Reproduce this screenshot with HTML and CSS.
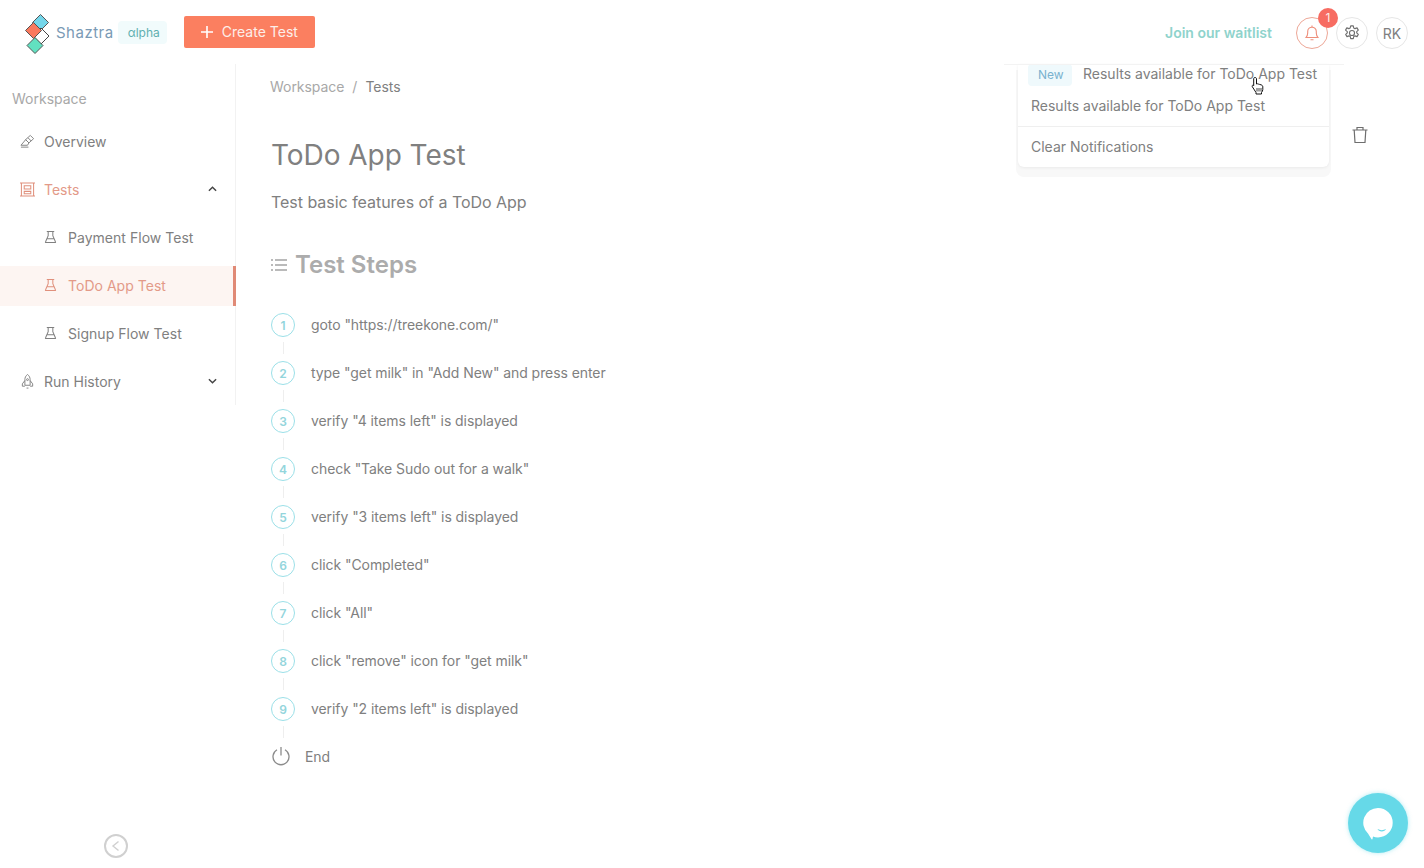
FILE: index.html
```html
<!DOCTYPE html>
<html lang="en">
<head>
<meta charset="utf-8">
<title>ToDo App Test</title>
<link rel="stylesheet" href="styles.css">
</head>
<body>
<header class="topbar">
  <a class="brand">
    <svg class="logo" width="28" height="40" viewBox="0 0 28 40">
      <path d="M16.500 .5 L24.500 8.500 L16.500 16.500 L8.500 8.500Z" fill="#74d6ea" stroke="#555" stroke-width="1"/>
      <path d="M17 14 L25 22 L17 30 L9 22Z" fill="#fff" stroke="#444" stroke-width="1"/>
      <path d="M9.500 8.500 L17.500 16.500 L9.500 24.500 L1.500 16.500Z" fill="#f9795e" stroke="#555" stroke-width="1"/>
      <path d="M11 23.500 L19 31.500 L11 39.500 L3 31.500Z" fill="#62e0c0" stroke="#555" stroke-width="1"/>
    </svg>
    <span class="brand-name">Shaztra</span>
    <span class="brand-tag">αlpha</span>
  </a>
  <button class="create-btn">
    <svg class="plus" width="12" height="12" viewBox="0 0 12 12"><path d="M6 0v12M0 6h12" stroke="#fff" stroke-width="1.600"/></svg>
    Create Test
  </button>
  <div class="top-actions">
    <a class="waitlist">Join our waitlist</a>
    <div class="round-btn bell">
      <svg width="18" height="18" viewBox="0 0 18 18" fill="none" stroke="#ee8f7b" stroke-width="1.100"><path d="M3 13.500h12c-1.200-1.300-1.700-2.500-1.700-4.500V7.500a4.300 4.300 0 0 0-8.600 0V9c0 2-.5 3.200-1.700 4.500z"/><path d="M7.500 15.700h3M9 1.500v1.500"/></svg>
      <span class="badge">1</span>
    </div>
    <div class="round-btn">
      <svg width="18" height="18" viewBox="0 0 24 24" fill="none" stroke="#6e6e6e" stroke-width="1.500"><circle cx="12" cy="12" r="3.400"/><path d="M10.300 2.500h3.400l.6 2.800 1.700.9 2.700-1 1.700 3-2.100 1.900v1.800l2.100 1.900-1.700 3-2.700-1-1.700.9-.6 2.800h-3.400l-.6-2.800-1.700-.9-2.700 1-1.700-3 2.100-1.900v-1.800L3.400 8.200l1.700-3 2.700 1 1.700-.9z" stroke-linejoin="round"/></svg>
    </div>
    <div class="round-btn avatar">RK</div>
  </div>
</header>

<div class="notif-menu">
  <div class="notif-row first"><span class="new-tag">New</span><span>Results available for ToDo App Test</span></div>
  <div class="notif-row second">Results available for ToDo App Test</div>
  <div class="notif-clear">Clear Notifications</div>
</div>
<svg class="cursor" width="16" height="20" viewBox="0 0 16 20">
  <path d="M5 1.500c1 0 1.500.6 1.500 1.500v5l1-.2 1 .3 1 .3 1.500.4c1.200.4 1.800 1 1.800 2.200v2.500c0 1.200-.6 2-1.300 3v1.500H6v-1.500L2.500 11c-.8-1-.3-2 .8-1.800l.4.500V3c0-1 .4-1.500 1.300-1.500z" fill="#fff" stroke="#111" stroke-width="1"/>
  <path d="M7 12v3.500M9 12v3.500M11 12v3.500" stroke="#111" stroke-width=".8"/>
</svg>

<div class="layout">
  <aside class="sidebar">
    <nav class="nav">
      <div class="nav-label">Workspace</div>
      <a class="nav-item">
        <svg class="ico" viewBox="0 0 16 16" fill="none" stroke="#808080" stroke-width="1"><path d="M11 1.500l3.500 3.500-5 4.500-3.500-3.500z"/><path d="M6 6L9.500 9.500 8 12H1l3-3.500z"/><path d="M8.500 4l3.500 3.500M1 14h8"/></svg>
        <span>Overview</span>
      </a>
      <a class="nav-item open">
        <svg class="ico" viewBox="0 0 16 16" fill="none" stroke="#e0907c" stroke-width="1.100"><path d="M0 1h16M0 15h16M1.500 1v14M14.500 1v14"/><path d="M4.500 4h7v3.500h-7zM4.500 10h7v2.500h-7z"/></svg>
        <span class="grow">Tests</span>
        <svg class="chev" viewBox="0 0 10 6"><path d="M1 5l4-4 4 4" fill="none" stroke="#444" stroke-width="1.600"/></svg>
      </a>
      <a class="nav-item sub">
        <svg class="ico small" viewBox="0 0 14 14" fill="none" stroke="#808080" stroke-width="1.100"><path d="M3 1h8M4.500 1v4.500L1.600 12.300c-.2.400 0 .7.400.7h10c.4 0 .6-.3.400-.7L9.500 5.500V1M3.200 9h7.600"/></svg>
        <span>Payment Flow Test</span>
      </a>
      <a class="nav-item sub active">
        <svg class="ico small" viewBox="0 0 14 14" fill="none" stroke="#e0907c" stroke-width="1.100"><path d="M3 1h8M4.500 1v4.500L1.600 12.300c-.2.400 0 .7.400.7h10c.4 0 .6-.3.400-.7L9.500 5.500V1M3.200 9h7.600"/></svg>
        <span>ToDo App Test</span>
      </a>
      <a class="nav-item sub">
        <svg class="ico small" viewBox="0 0 14 14" fill="none" stroke="#808080" stroke-width="1.100"><path d="M3 1h8M4.500 1v4.500L1.600 12.300c-.2.400 0 .7.400.7h10c.4 0 .6-.3.400-.7L9.500 5.500V1M3.200 9h7.600"/></svg>
        <span>Signup Flow Test</span>
      </a>
      <a class="nav-item">
        <svg class="ico" viewBox="0 0 16 16" fill="none" stroke="#808080" stroke-width="1"><path d="M8 .5c2 1.500 2.800 3.500 2.800 5.500v6H5.200V6C5.200 4 6 2 8 .5z"/><path d="M5.200 7L2.500 10.500V13h2.700M10.800 7l2.700 3.500V13h-2.700M7 15h2"/><circle cx="8" cy="6" r="1"/></svg>
        <span class="grow">Run History</span>
        <svg class="chev" viewBox="0 0 10 6"><path d="M1 1l4 4 4-4" fill="none" stroke="#444" stroke-width="1.600"/></svg>
      </a>
    </nav>
    <div class="collapse">
      <svg width="24" height="24" viewBox="0 0 24 24" fill="none" stroke="#d0d0d0" stroke-width="2"><circle cx="12" cy="12" r="11"/><path d="M14.500 7.500L9 12l5.500 4.500" stroke-width="1.400"/></svg>
    </div>
  </aside>

  <main class="content">
    <div class="crumbs">
      <span class="crumb-link">Workspace</span><span class="crumb-sep">/</span><span class="crumb-cur">Tests</span>
    </div>
    <div class="title-row">
      <div class="titles">
        <h1 class="title">ToDo App Test</h1>
        <p class="desc">Test basic features of a ToDo App</p>
      </div>
      <svg class="trash" width="18" height="18" viewBox="0 0 18 18" fill="none" stroke="#6e6e6e" stroke-width="1.200"><path d="M1.500 4h15M6 4V1.500h6V4M3.200 4l.8 12.500h10l.8-12.500"/></svg>
    </div>
    <h2 class="steps-head">
      <svg width="16" height="12" viewBox="0 0 16 12" fill="none" stroke="#777" stroke-width="1.200"><path d="M4 1h12M4 6h12M4 11h12M0 1h2M0 6h2M0 11h2"/></svg>
      <span>Test Steps</span>
    </h2>
    <ol class="steps">
      <li class="step"><span class="num">1</span><span>goto "https://treekone.com/"</span></li>
      <li class="step"><span class="num">2</span><span>type "get milk" in "Add New" and press enter</span></li>
      <li class="step"><span class="num">3</span><span>verify "4 items left" is displayed</span></li>
      <li class="step"><span class="num">4</span><span>check "Take Sudo out for a walk"</span></li>
      <li class="step"><span class="num">5</span><span>verify "3 items left" is displayed</span></li>
      <li class="step"><span class="num">6</span><span>click "Completed"</span></li>
      <li class="step"><span class="num">7</span><span>click "All"</span></li>
      <li class="step"><span class="num">8</span><span>click "remove" icon for "get milk"</span></li>
      <li class="step"><span class="num">9</span><span>verify "2 items left" is displayed</span></li>
      <li class="step end">
        <svg class="power" width="20" height="20" viewBox="0 0 20 20" fill="none" stroke="#8c8c8c" stroke-width="1.300"><path d="M6 3.800a8 8 0 1 0 8 0M10 1v8.500"/></svg>
        <span>End</span>
      </li>
    </ol>
  </main>
</div>

<div class="chat">
  <svg width="30" height="32" viewBox="0 0 30 32"><path d="M15 0a14.700 14.700 0 0 1 0 29.400c-1.800 0-3.500-.3-5-.9L9.500 31c-.1.500-.5.500-.9.200L5 25.500A14.700 14.700 0 0 1 15 0z" fill="#fff"/><path d="M14.500 21c2.500 1.500 6 1.500 8.500 0-1 3.200-7.500 3.200-8.500 0z" fill="#66d9e8"/></svg>
</div>
</body>
</html>
```
FILE: styles.css
```css
* { box-sizing: border-box; }
html, body { margin: 0; height: 868px; overflow: hidden; }
body {
  position: relative;
  background: #fff;
  color: #808080;
  font-family: Inter, "Liberation Sans", sans-serif;
  font-size: 14px;
}
.topbar {
  display: flex;
  align-items: center;
  height: 64px;
  padding: 0 16px 0 24px;
}
.brand { display: flex; align-items: center; }
.logo { margin-right: 4px; margin-top: 4px; }
.brand-name { color: #7a9ab5; font-size: 15px; letter-spacing: .5px; }
.brand-tag {
  width: 49px;
  margin-left: 4px;
  padding: 4px 0 4px 10px;
  border-radius: 4px;
  background: #f1fbfc;
  color: #5fb0b0;
  font-size: 12px;
}
.create-btn {
  display: flex;
  align-items: center;
  width: 131px;
  height: 32px;
  margin-left: 17px;
  padding: 0 0 2px 17px;
  border: 0;
  border-radius: 2px;
  background: #fb7f60;
  color: #fdeee9;
  font: inherit;
  letter-spacing: .02px;
}
.plus { margin-right: 9px; margin-top: 2px; }
.top-actions { display: flex; align-items: center; margin-left: auto; margin-top: 2px; }
.waitlist { margin-right: 24px; margin-bottom: 2px; color: #8fd3cc; font-weight: 600; }
.round-btn {
  position: relative;
  display: flex;
  align-items: center;
  justify-content: center;
  width: 32px;
  height: 32px;
  margin-left: 8px;
  border: 1px solid #e6e6e6;
  border-radius: 50%;
  color: #808080;
}
.bell { margin-left: 0; border-color: #eda797; }
.badge {
  position: absolute;
  top: -10px;
  right: -11px;
  width: 20px;
  height: 20px;
  border-radius: 50%;
  background: #f76c62;
  color: #fdeee9;
  font-size: 12px;
  line-height: 20px;
  text-align: center;
}
.avatar { font-size: 14px; }

.notif-menu {
  position: absolute;
  z-index: 5;
  top: 64px;
  left: 1018px;
  width: 311px;
  height: 103px;
  background: #fff;
  box-shadow: 0 1px 3px rgba(0,0,0,.06), 0 8px 0 2px #f8f8f8;
  border-radius: 0 0 6px 6px;
  color: #808080;
}
.notif-menu::before {
  content: "";
  position: absolute;
  top: 0;
  left: -14px;
  right: -15px;
  height: 1px;
  background: #f3f3f3;
}
.notif-row { display: flex; align-items: center; padding-left: 13px; white-space: nowrap; }
.notif-row.first { height: 18px; }
.notif-row.second { height: 32px; margin-top: 7px; }
.new-tag {
  display: block;
  width: 44px;
  height: 22px;
  margin: 3px 11px 0 -3px;
  padding-left: 10px;
  border-radius: 4px;
  background: #eff9fc;
  color: #7ab2cf;
  font-size: 12px;
  line-height: 22px;
}
.notif-clear {
  height: 41px;
  margin-top: 5px;
  padding-left: 13px;
  border-top: 1px solid #efefef;
  line-height: 40px;
}
.cursor { position: absolute; z-index: 6; top: 76px; left: 1250px; }

.layout { display: flex; height: 804px; }
.sidebar { display: flex; flex-direction: column; width: 236px; flex: none; }
.nav { display: flex; flex-direction: column; gap: 8px; height: 341px; border-right: 1px solid #f2f2f2; }
.nav-label { height: 50px; padding: 26px 0 0 12px; color: #a8a8a8; line-height: 18px; }
.nav-item {
  display: flex;
  align-items: center;
  height: 40px;
  padding: 0 18px 2px 20px;
  color: #808080;
}
.nav-item.open { color: #e39a88; }
.nav-item.sub { padding-left: 44px; letter-spacing: .03px; }
.nav-item.active { margin-right: -1px; border-right: 3px solid #e08a76; background: #fdf5f2; color: #e39a88; }
.ico { width: 15px; height: 15px; margin-right: 9px; flex: none; }
.ico.small { width: 13px; height: 14px; margin-right: 11px; }
.grow { flex: 1; }
.chev { width: 9px; height: 6px; }
.collapse { align-self: center; height: 24px; margin: auto 0 10px -4px; }
.collapse svg { display: block; }

.content { flex: 1; padding: 14px 55px 0 34px; }
.crumbs { height: 18px; line-height: 18px; }
.crumb-link { color: #a8a8a8; letter-spacing: -.05px; }
.crumb-sep { margin: 0 8px; color: #a8a8a8; }
.crumb-cur { color: #808080; }
.title-row { display: flex; justify-content: space-between; padding-left: 1px; }
.titles { flex: 1; }
.title { height: 42px; margin: 38px 0 0; color: #808080; font-size: 28px; font-weight: 400; line-height: 42px; letter-spacing: -.05px; }
.desc { margin: 14px 0 0; color: #808080; font-size: 16px; line-height: 24px; letter-spacing: -.03px; }
.trash { margin-top: 30px; }
.steps-head {
  display: flex;
  align-items: center;
  gap: 8px;
  height: 32px;
  margin: 35px 0 0 1px;
  color: #acacac;
  font-size: 24px;
  font-weight: 600;
  line-height: 32px;
}
.steps { margin: 19px 0 0; padding: 0; list-style: none; }
.step {
  position: relative;
  display: flex;
  align-items: center;
  height: 48px;
  padding-left: 1px;
  color: #808080;
  letter-spacing: -.07px;
}
.step::after {
  content: "";
  position: absolute;
  left: 13px;
  top: 42px;
  width: 1px;
  height: 12px;
  background: #eee;
}
.step.end::after { display: none; }
.num {
  display: flex;
  align-items: center;
  justify-content: center;
  width: 24px;
  height: 24px;
  margin: 2px 16px 0 0;
  border: 1.500px solid #9be0e8;
  border-radius: 50%;
  color: #93d5dc;
  font-size: 12px;
  font-weight: 600;
}
.power { margin-right: 14px; }

.chat {
  position: absolute;
  right: 16px;
  bottom: 15px;
  display: flex;
  align-items: center;
  justify-content: center;
  width: 60px;
  height: 60px;
  padding-top: 2px;
  border-radius: 50%;
  background: #66d9e8;
  box-shadow: 0 0 4px rgba(102,217,232,.5);
}
```
